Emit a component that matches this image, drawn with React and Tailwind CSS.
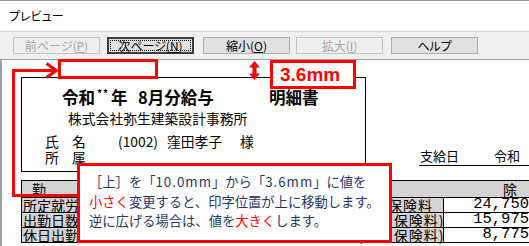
import React from "react";

const jp = "font-['Noto_Sans_CJK_JP',sans-serif]";
const mono = "font-['Liberation_Mono','Noto_Sans_CJK_JP',monospace]";

const buttons = [
  { text: "前ページ", key: "P", disabled: true, ml: "ml-[13px]" },
  { text: "次ページ", key: "N", focused: true, ml: "ml-[7px]" },
  { text: "縮小", key: "O", ml: "ml-[9px]" },
  { text: "拡大", key: "I", disabled: true, ml: "ml-[6px]" },
  { text: "ヘルプ", ml: "ml-[8px]" },
];

const leftRows = [
  { label: "所定就労日数", value: "20.00" },
  { label: "出勤日数", value: "20.00" },
  { label: "休日出勤日数", value: "0.00" },
];

const rightRows = [
  { label: "健康保険料", value: "24,750" },
  { label: "(介護保険料)", value: "15,975" },
  { label: "(特定保険料)", value: "8,775" },
];

function ToolButton({ text, keyChar, disabled, focused, ml }) {
  let look = "border border-[#adadad] bg-[#e1e1e1] text-black";
  if (disabled) look = "border border-[#c4c4c4] bg-[#efefef] text-[#a3a3a3]";
  if (focused) look = "border-2 border-[#3c3c3c] bg-[#e1e1e1] text-black";
  return (
    <div
      className={`relative ${ml} h-[17px] w-[87px] shrink-0 flex items-center justify-center text-[12px] leading-none [font-feature-settings:'palt'] ${look}`}
    >
      {focused && (
        <span className="absolute inset-[1px] border border-dotted border-black" />
      )}
      <span>
        {text}
        {keyChar && (
          <>
            (<span className="underline underline-offset-1">{keyChar}</span>)
          </>
        )}
      </span>
    </div>
  );
}

export default function App() {
  return (
    <div
      className={`relative w-[529px] h-[246px] overflow-hidden bg-white flex flex-col ${jp}`}
    >
      {/* title bar */}
      <div className="h-[31px] shrink-0 border-t border-[#9a9a9a] flex items-center pl-[9px] text-[12px] text-black [font-feature-settings:'palt']">
        プレビュー
      </div>

      {/* toolbar */}
      <div className="h-[29px] shrink-0 border-t border-b border-t-[#d6d6d6] border-b-[#a0a0a0] bg-[#f0f0f0] flex items-start pt-[5px]">
        {buttons.map((b) => (
          <ToolButton
            key={b.text}
            text={b.text}
            keyChar={b.key}
            disabled={b.disabled}
            focused={b.focused}
            ml={b.ml}
          />
        ))}
      </div>

      {/* preview paper */}
      <div className="relative flex-1 border-l-2 border-[#a0a0a0] pl-[19px] pt-[17px] text-black">
        <div className="flex">
          <div className="w-[345px] h-[95px] shrink-0 border border-black flex flex-col">
            <div className="mt-[9px] pl-[40px] flex text-[16.5px] leading-[20px] font-bold whitespace-nowrap">
              <span className="w-[33px]">令和</span>
              <span className="w-[16px] self-start text-[10px] leading-[12px] tracking-[1px] pl-[2px]">
                **
              </span>
              <span className="w-[27px]">年</span>
              <span className="w-[131px]">8月分給与</span>
              <span>明細書</span>
            </div>
            <div className="mt-[1px] pl-[46px] text-[13.8px] leading-[20px] whitespace-nowrap">
              株式会社弥生建築設計事務所
            </div>
            <div className="mt-[5px] pl-[23px] flex text-[13.8px] leading-[16px] whitespace-nowrap">
              <span className="w-[27px]">氏</span>
              <span className="w-[46px]">名</span>
              <span className="w-[49px]">(1002)</span>
              <span className="w-[73px]">窪田孝子</span>
              <span>様</span>
            </div>
            <div className="pl-[23px] flex text-[13.8px] leading-[16px]">
              <span className="w-[27px]">所</span>
              <span>属</span>
            </div>
          </div>
          <div className="ml-[53px] mb-[6px] self-end w-[120px] shrink-0 border-b border-black flex text-[13px] leading-[16px] pl-[1px] pb-[1px] whitespace-nowrap">
            <span className="w-[74px]">支給日</span>
            <span>令和</span>
          </div>
        </div>

        <div className="mt-[8px] flex items-start">
          <div className="w-[330px] shrink-0 border-t border-l border-black text-[14px] leading-none">
            <div className="h-[17px] bg-[#d4d4d4] border-b border-r border-black flex items-center pl-[10px]">
              勤
            </div>
            {leftRows.map((r) => (
              <div key={r.label} className="flex h-[15px]">
                <div className="w-[86px] shrink-0 bg-[#d4d4d4] border-r border-b border-black flex items-center pl-[1px] whitespace-nowrap">
                  {r.label}
                </div>
                <div
                  className={`w-[62px] shrink-0 border-r border-b border-black flex items-center justify-end pr-[3px] text-[15px] ${mono}`}
                >
                  {r.value}
                </div>
                <div className="flex-1 border-r border-b border-black bg-[#d4d4d4]" />
              </div>
            ))}
          </div>

          <div className="ml-[4px] w-[176px] shrink-0 border-t border-l border-black text-[14px] leading-none">
            <div className="h-[17px] bg-[#d4d4d4] border-b border-r border-black flex items-center justify-end pr-[13px]">
              除
            </div>
            {rightRows.map((r) => (
              <div key={r.label} className="flex h-[15px]">
                <div className="w-[88px] shrink-0 bg-[#d4d4d4] border-r border-b border-black flex items-center pl-[2px] tracking-[1px] whitespace-nowrap">
                  {r.label}
                </div>
                <div
                  className={`flex-1 border-r border-b border-black flex items-center justify-end pr-[1px] text-[15.5px] ${mono}`}
                >
                  {r.value}
                </div>
              </div>
            ))}
          </div>
        </div>
      </div>

      {/* annotations */}
      <svg
        className="absolute left-0 top-0 pointer-events-none"
        width="529"
        height="246"
        viewBox="0 0 529 246"
      >
        <path d="M56 70.5H13.5V195.5H79" fill="none" stroke="#ff0000" strokeWidth="3" />
        <path d="M46.5 63.5L56.5 70.5L46.5 77.5" fill="none" stroke="#ff0000" strokeWidth="3" />
        <path
          d="M254.5 61L260 67.5H256.5V73.5H260L254.5 80L249 73.5H252.5V67.5H249Z"
          fill="#ff0000"
        />
      </svg>

      <div className="absolute left-[58px] top-[59px] w-[100px] h-[20px] border-[3px] border-[#ff0000]" />

      <div className="absolute left-[270px] top-[60px] w-[86px] h-[29px] border-[3px] border-[#ff0000] bg-white flex items-center pl-[7px] text-[19px] leading-none font-bold text-[#ff0000] font-['Liberation_Sans',sans-serif]">
        3.6mm
      </div>

      <div className="absolute left-[77px] top-[163px] w-[315px] h-[80px] border-[3px] border-[#ff0000] bg-white pl-[9px] pt-[6px] text-[13.3px] leading-[19.5px] text-[#1f3864] whitespace-nowrap">
        <div>
          ［上］を「<span className="tracking-[1px]">10.0mm</span>」から「
          <span className="tracking-[1px]">3.6mm</span>」に値を
        </div>
        <div>
          <span className="text-[#ff0000]">小さく</span>
          変更すると、印字位置が上に移動します。
        </div>
        <div>
          逆に広げる場合は、値を<span className="text-[#ff0000]">大きく</span>します。
        </div>
      </div>
    </div>
  );
}
